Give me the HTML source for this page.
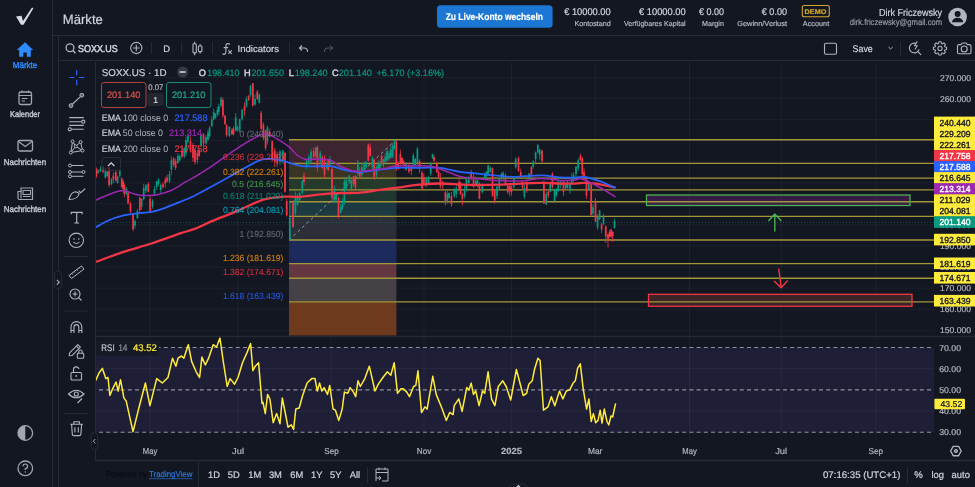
<!DOCTYPE html>
<html><head><meta charset="utf-8"><style>
html,body{margin:0;padding:0;background:#131722;width:975px;height:487px;overflow:hidden}
svg{display:block;will-change:transform;text-rendering:geometricPrecision;font-family:"Liberation Sans",sans-serif}
</style></head><body>
<svg width="975" height="487" viewBox="0 0 975 487">
<rect x="0" y="0" width="975" height="487" fill="#131722"/>
<rect x="96" y="347.5" width="838" height="84.8" fill="#1e1e37"/>
<path d="M96 330.2H934 M96 309.2H934 M96 288.1H934 M96 267.1H934 M96 246.0H934 M96 224.9H934 M96 203.9H934 M96 182.8H934 M96 161.8H934 M96 140.7H934 M96 119.7H934 M96 98.6H934 M96 77.6H934 M96 368.7H934 M96 411.1H934 M150.0 62V441 M238.0 62V441 M331.6 62V441 M424.0 62V441 M511.6 62V441 M595.2 62V441 M689.5 62V441 M781.2 62V441 M875.8 62V441" stroke="#ffffff" stroke-opacity="0.045" stroke-width="1" fill="none"/>
<path d="M96 347.5H934" stroke="#8f929b" stroke-width="1.1" stroke-dasharray="4 3.2" stroke-dashoffset="-3" fill="none"/>
<path d="M96 389.9H934" stroke="#8f929b" stroke-width="1.1" stroke-dasharray="4 3.2" stroke-dashoffset="-3" fill="none"/>
<path d="M96 432.3H934" stroke="#8f929b" stroke-width="1.1" stroke-dasharray="4 3.2" stroke-dashoffset="-3" fill="none"/>
<rect x="289" y="139.8" width="107.4" height="23.6" fill="#3d2431"/>
<rect x="289" y="163.4" width="107.4" height="14.6" fill="#3a3426"/>
<rect x="289" y="178.1" width="107.4" height="11.8" fill="#263a2c"/>
<rect x="289" y="189.9" width="107.4" height="11.8" fill="#1f3631"/>
<rect x="289" y="201.7" width="107.4" height="14.6" fill="#1d3a43"/>
<rect x="289" y="216.4" width="107.4" height="23.6" fill="#2c2f38"/>
<rect x="289" y="240.0" width="107.4" height="23.6" fill="#1c2b5c"/>
<rect x="289" y="263.6" width="107.4" height="14.6" fill="#643741"/>
<rect x="289" y="278.3" width="107.4" height="23.6" fill="#464146"/>
<rect x="289" y="301.9" width="107.4" height="33.6" fill="#6e3a1e"/>
<rect x="646.5" y="195" width="263.5" height="10.5" fill="#9c27b0" fill-opacity="0.25"/>
<rect x="648.5" y="294.3" width="263.5" height="12" fill="#3e2428"/>
<path d="M289 139.8H934 M289 163.4H934 M289 178.1H934 M289 189.9H934 M289 201.7H934 M289 216.4H934 M289 240.0H934 M289 263.6H934 M289 278.3H934 M289 301.9H934" stroke="#a39838" stroke-width="1.4" fill="none"/>
<path d="M289 240.0L396 139.8" stroke="#9598a1" stroke-width="1" stroke-dasharray="3 3" fill="none"/>
<path d="M96 222.5H934" stroke="#089981" stroke-width="1" stroke-dasharray="1 2" fill="none" opacity="0.45"/>
<path d="M98.00 169.3V174.2 M100.50 166.2V172.0 M105.40 168.5V178.7 M107.30 170.7V176.9 M111.50 178.0V185.5 M117.60 175.7V183.7 M119.80 169.5V177.6 M126.30 187.0V195.3 M135.00 219.5V228.4 M137.40 208.9V219.0 M141.60 198.3V210.0 M143.70 183.8V200.2 M145.90 184.2V192.8 M152.50 199.2V208.7 M154.40 185.8V194.8 M156.60 180.7V189.9 M158.50 178.0V186.0 M160.70 183.6V192.9 M169.50 170.8V183.1 M171.40 156.3V174.6 M177.80 153.1V163.9 M179.70 154.7V161.7 M184.30 146.8V158.2 M186.00 136.6V155.9 M188.00 133.7V143.3 M201.00 133.8V147.2 M206.00 135.2V144.8 M208.00 129.9V140.6 M209.60 125.8V138.3 M211.80 116.3V127.4 M213.70 108.9V120.3 M215.50 113.1V118.8 M217.40 106.9V116.4 M218.80 103.7V114.9 M221.00 96.3V107.4 M229.40 126.1V137.1 M235.70 113.2V131.6 M237.50 125.3V131.7 M239.70 118.7V132.7 M242.10 108.8V120.6 M246.40 96.4V107.4 M250.50 84.6V97.1 M255.00 94.0V105.7 M259.30 93.4V103.4 M267.40 125.5V144.7 M280.00 149.8V165.0 M283.00 149.9V164.3 M289.80 201.0V240.5 M295.40 191.5V216.0 M297.50 193.8V205.8 M299.70 192.2V201.9 M302.30 180.0V194.5 M306.60 158.8V169.3 M308.80 154.6V166.9 M311.00 148.9V163.4 M315.90 146.9V158.7 M320.20 150.8V164.9 M327.00 161.9V169.9 M330.10 155.7V166.9 M334.40 185.3V202.3 M336.20 192.1V202.0 M340.70 203.8V213.6 M342.50 198.3V210.1 M344.40 178.1V205.1 M346.20 179.0V190.2 M349.20 175.0V184.1 M351.40 179.3V191.5 M357.80 160.0V175.9 M362.00 163.2V177.2 M364.30 161.7V171.6 M366.20 160.9V168.0 M372.40 156.1V169.4 M376.40 165.4V177.7 M378.30 160.4V171.4 M379.80 160.6V170.0 M383.50 158.6V167.7 M385.30 153.4V163.2 M387.10 148.9V162.0 M389.00 150.8V160.6 M390.80 146.0V158.5 M392.70 143.0V158.1 M394.50 139.5V149.7 M406.00 162.2V170.9 M413.30 153.1V167.5 M415.20 157.9V166.8 M417.40 146.5V166.5 M426.20 176.8V187.0 M428.50 175.8V184.8 M430.70 162.5V175.8 M432.50 153.7V159.0 M447.30 190.4V203.7 M449.10 192.3V199.5 M454.30 188.2V197.9 M456.30 185.5V197.9 M464.60 186.0V198.5 M466.40 176.6V191.5 M468.80 175.6V185.4 M475.70 176.5V185.9 M477.50 179.3V187.5 M482.30 183.4V193.5 M484.90 172.0V179.4 M486.60 170.8V178.0 M488.20 164.7V175.8 M490.40 166.3V172.6 M497.00 185.9V198.9 M499.30 177.9V191.0 M501.50 172.3V180.2 M503.30 171.4V180.7 M513.80 176.1V189.8 M515.70 157.0V168.8 M524.40 184.0V199.1 M529.00 172.8V180.3 M533.20 160.1V168.6 M535.60 151.5V164.2 M537.80 144.0V153.5 M539.70 149.0V159.7 M546.20 191.3V205.1 M550.20 182.3V192.3 M554.60 188.8V201.7 M556.40 188.0V197.2 M558.30 179.0V192.4 M560.70 180.9V188.4 M565.70 182.5V189.6 M567.50 180.8V188.7 M570.00 182.4V193.9 M571.80 173.1V183.9 M573.60 172.4V181.9 M576.00 165.9V177.9 M578.20 158.3V170.9 M588.80 183.5V190.6 M593.00 204.0V216.2 M597.60 214.0V229.8 M599.60 209.7V220.2 M603.50 213.7V224.8 M614.50 218.6V228.7" stroke="#089981" stroke-width="0.8" fill="none"/>
<path d="M96.20 167.4V178.3 M103.00 166.4V173.4 M109.10 167.4V187.1 M113.40 172.2V183.2 M115.80 169.8V181.8 M121.70 177.4V188.3 M123.20 179.6V192.4 M124.40 183.4V197.1 M128.10 191.2V204.3 M130.50 201.8V212.8 M133.10 213.2V231.0 M139.80 196.6V213.3 M148.30 182.0V192.4 M150.10 195.8V213.1 M163.00 182.0V188.6 M165.30 176.8V187.7 M167.10 174.6V182.5 M173.60 157.3V166.9 M175.60 158.4V170.1 M182.00 147.5V158.3 M190.50 136.8V152.7 M193.00 142.9V161.9 M195.00 149.1V164.4 M197.40 149.7V163.5 M199.20 148.4V156.9 M203.50 133.2V146.2 M222.90 97.4V117.9 M225.00 114.6V124.9 M226.60 124.1V136.8 M232.00 128.1V134.9 M233.50 126.5V135.6 M244.50 102.5V116.2 M248.60 94.9V101.0 M252.80 83.0V106.9 M257.30 90.0V99.8 M261.20 111.0V130.0 M263.40 122.4V140.4 M265.60 129.7V150.3 M269.80 128.5V137.2 M272.20 140.2V161.7 M274.80 148.0V167.1 M277.20 151.7V166.8 M285.00 152.1V192.6 M286.70 199.0V216.4 M293.10 200.2V227.9 M304.00 172.3V185.3 M313.70 147.5V159.5 M317.40 145.5V171.5 M322.30 154.8V168.9 M324.50 155.3V177.6 M328.30 158.7V171.3 M332.00 166.4V201.0 M338.50 196.9V218.5 M353.60 175.8V186.5 M355.40 175.1V191.1 M359.70 167.0V179.1 M368.30 143.5V161.4 M370.20 143.7V156.5 M374.20 158.5V179.9 M381.60 155.2V166.0 M396.40 140.2V171.1 M398.20 161.3V169.8 M400.40 149.4V165.4 M402.00 156.9V164.4 M403.70 159.4V166.9 M408.90 163.0V173.3 M411.30 165.0V175.4 M419.60 159.4V173.2 M422.00 170.5V190.3 M423.80 173.4V184.8 M434.00 154.6V162.0 M436.80 161.4V172.8 M438.60 169.9V178.6 M440.40 173.0V188.4 M442.80 180.3V191.0 M445.40 190.5V205.5 M451.50 191.9V206.7 M459.00 178.9V190.3 M460.50 181.9V194.9 M462.40 192.7V205.5 M471.20 169.8V180.5 M473.50 174.3V187.8 M479.40 182.1V199.5 M492.50 167.4V196.9 M494.70 189.8V203.5 M505.50 173.4V185.5 M507.70 183.4V194.1 M509.60 183.4V196.3 M511.40 184.2V195.6 M518.50 156.5V171.9 M520.70 168.7V178.4 M522.50 181.4V189.3 M526.80 179.6V192.9 M531.40 166.2V177.2 M542.00 149.5V163.0 M543.90 180.6V203.9 M548.30 190.5V198.0 M552.40 171.9V188.6 M563.50 180.1V195.9 M580.40 153.5V161.0 M582.30 156.8V177.8 M584.10 168.4V178.5 M586.50 177.9V198.9 M591.20 182.5V216.5 M595.50 198.0V222.5 M601.60 222.7V233.1 M605.80 225.5V243.0 M608.00 233.5V247.5 M609.60 230.1V237.7 M611.20 228.8V238.3 M612.70 231.1V242.0" stroke="#f23645" stroke-width="0.8" fill="none"/>
<path d="M97.15 170.3h1.7v2.7h-1.7z M99.65 168.5h1.7v2.5h-1.7z M104.55 171.0h1.7v6.7h-1.7z M106.45 172.0h1.7v4.0h-1.7z M110.65 179.5h1.7v4.5h-1.7z M116.75 176.8h1.7v6.2h-1.7z M118.95 171.0h1.7v4.8h-1.7z M125.45 188.7h1.7v4.7h-1.7z M134.15 221.0h1.7v4.6h-1.7z M136.55 211.0h1.7v7.0h-1.7z M140.75 199.0h1.7v8.0h-1.7z M142.85 188.0h1.7v11.0h-1.7z M145.05 185.0h1.7v5.7h-1.7z M151.65 201.0h1.7v5.4h-1.7z M153.55 189.0h1.7v4.5h-1.7z M155.75 181.5h1.7v5.5h-1.7z M157.65 179.7h1.7v4.6h-1.7z M159.85 185.0h1.7v5.0h-1.7z M168.65 174.0h1.7v7.5h-1.7z M170.55 160.3h1.7v9.2h-1.7z M176.95 155.7h1.7v7.3h-1.7z M178.85 155.7h1.7v4.6h-1.7z M183.45 148.3h1.7v8.3h-1.7z M185.15 140.0h1.7v13.0h-1.7z M187.15 136.0h1.7v5.7h-1.7z M200.15 135.0h1.7v10.4h-1.7z M205.15 137.0h1.7v6.5h-1.7z M207.15 132.4h1.7v7.6h-1.7z M208.75 128.0h1.7v8.0h-1.7z M210.95 119.5h1.7v6.5h-1.7z M212.85 112.0h1.7v7.5h-1.7z M214.65 114.0h1.7v3.7h-1.7z M216.55 110.0h1.7v4.0h-1.7z M217.95 106.6h1.7v5.4h-1.7z M220.15 98.3h1.7v7.4h-1.7z M228.55 127.0h1.7v9.0h-1.7z M234.85 117.4h1.7v13.0h-1.7z M236.65 126.7h1.7v3.7h-1.7z M238.85 119.3h1.7v11.1h-1.7z M241.25 110.0h1.7v9.3h-1.7z M245.55 99.0h1.7v7.4h-1.7z M249.65 86.0h1.7v9.3h-1.7z M254.15 99.0h1.7v5.5h-1.7z M258.45 94.4h1.7v8.3h-1.7z M266.55 127.6h1.7v13.8h-1.7z M279.15 151.6h1.7v10.1h-1.7z M282.15 150.8h1.7v10.7h-1.7z M288.95 217.6h1.7v22.4h-1.7z M294.55 197.0h1.7v16.3h-1.7z M296.65 196.0h1.7v8.7h-1.7z M298.85 193.0h1.7v7.0h-1.7z M301.45 181.0h1.7v11.8h-1.7z M305.75 160.5h1.7v6.5h-1.7z M307.95 157.0h1.7v6.7h-1.7z M310.15 151.8h1.7v9.7h-1.7z M315.05 147.5h1.7v8.5h-1.7z M319.35 153.0h1.7v8.5h-1.7z M326.15 162.7h1.7v5.5h-1.7z M329.25 159.0h1.7v5.5h-1.7z M333.55 188.5h1.7v12.9h-1.7z M335.35 194.0h1.7v5.6h-1.7z M339.85 207.0h1.7v5.5h-1.7z M341.65 203.0h1.7v5.8h-1.7z M343.55 182.0h1.7v21.0h-1.7z M345.35 180.2h1.7v8.3h-1.7z M348.35 175.6h1.7v6.4h-1.7z M350.55 180.0h1.7v8.5h-1.7z M356.95 161.8h1.7v11.9h-1.7z M361.15 167.3h1.7v7.4h-1.7z M363.45 164.5h1.7v6.5h-1.7z M365.35 161.8h1.7v5.5h-1.7z M371.55 157.7h1.7v9.3h-1.7z M375.55 167.0h1.7v8.2h-1.7z M377.45 164.0h1.7v5.7h-1.7z M378.95 163.0h1.7v5.0h-1.7z M382.65 159.5h1.7v5.5h-1.7z M384.45 156.8h1.7v4.6h-1.7z M386.25 151.2h1.7v9.2h-1.7z M388.15 153.0h1.7v5.6h-1.7z M389.95 149.4h1.7v8.3h-1.7z M391.85 145.7h1.7v11.1h-1.7z M393.65 140.1h1.7v8.4h-1.7z M405.15 164.0h1.7v5.7h-1.7z M412.45 155.3h1.7v9.2h-1.7z M414.35 159.0h1.7v6.4h-1.7z M416.55 148.8h1.7v13.9h-1.7z M425.35 178.4h1.7v6.4h-1.7z M427.65 178.0h1.7v6.0h-1.7z M429.85 163.6h1.7v10.1h-1.7z M431.65 154.4h1.7v3.6h-1.7z M446.45 194.0h1.7v8.3h-1.7z M448.25 193.0h1.7v5.0h-1.7z M453.45 189.4h1.7v6.6h-1.7z M455.45 188.5h1.7v5.5h-1.7z M463.75 190.4h1.7v5.6h-1.7z M465.55 179.3h1.7v9.2h-1.7z M467.95 179.3h1.7v3.7h-1.7z M474.85 181.0h1.7v3.0h-1.7z M476.65 180.0h1.7v6.0h-1.7z M481.45 184.8h1.7v7.4h-1.7z M484.05 173.7h1.7v4.7h-1.7z M485.75 172.0h1.7v4.0h-1.7z M487.35 165.4h1.7v8.3h-1.7z M489.55 168.0h1.7v4.0h-1.7z M496.15 186.7h1.7v9.3h-1.7z M498.45 179.3h1.7v9.2h-1.7z M500.65 173.7h1.7v5.6h-1.7z M502.45 172.8h1.7v5.6h-1.7z M512.95 177.4h1.7v9.3h-1.7z M514.85 159.0h1.7v8.3h-1.7z M523.55 187.6h1.7v9.2h-1.7z M528.15 173.7h1.7v4.7h-1.7z M532.35 161.8h1.7v4.6h-1.7z M534.75 152.5h1.7v6.5h-1.7z M536.95 145.0h1.7v7.5h-1.7z M538.85 149.8h1.7v4.6h-1.7z M545.35 194.0h1.7v10.2h-1.7z M549.35 184.3h1.7v7.4h-1.7z M553.75 189.8h1.7v11.2h-1.7z M555.55 189.0h1.7v6.4h-1.7z M557.45 181.5h1.7v9.2h-1.7z M559.85 181.5h1.7v3.7h-1.7z M564.85 184.3h1.7v3.7h-1.7z M566.65 182.4h1.7v5.6h-1.7z M569.15 183.4h1.7v7.3h-1.7z M570.95 177.0h1.7v5.4h-1.7z M572.75 175.0h1.7v4.7h-1.7z M575.15 166.8h1.7v7.2h-1.7z M577.35 160.3h1.7v8.3h-1.7z M587.95 184.2h1.7v5.4h-1.7z M592.15 207.3h1.7v6.2h-1.7z M596.75 216.5h1.7v10.8h-1.7z M598.75 210.4h1.7v9.2h-1.7z M602.65 216.5h1.7v7.7h-1.7z M613.65 221.0h1.7v7.0h-1.7z" fill="#089981"/>
<path d="M95.35 168.5h1.7v8.3h-1.7z M102.15 169.0h1.7v3.0h-1.7z M108.25 171.0h1.7v14.0h-1.7z M112.55 175.8h1.7v3.7h-1.7z M114.95 172.0h1.7v8.4h-1.7z M120.85 178.6h1.7v8.4h-1.7z M122.35 181.4h1.7v7.3h-1.7z M123.55 185.0h1.7v9.3h-1.7z M127.25 192.4h1.7v11.1h-1.7z M129.65 203.5h1.7v8.3h-1.7z M132.25 214.6h1.7v14.7h-1.7z M138.95 198.0h1.7v12.0h-1.7z M147.45 184.0h1.7v7.7h-1.7z M149.25 199.0h1.7v12.0h-1.7z M162.15 184.3h1.7v2.7h-1.7z M164.45 179.7h1.7v3.7h-1.7z M166.25 177.8h1.7v3.7h-1.7z M172.75 158.5h1.7v6.5h-1.7z M174.75 161.0h1.7v6.7h-1.7z M181.15 151.0h1.7v5.6h-1.7z M189.65 141.0h1.7v10.0h-1.7z M192.15 145.0h1.7v13.0h-1.7z M194.15 150.0h1.7v12.0h-1.7z M196.55 152.7h1.7v7.3h-1.7z M198.35 150.0h1.7v6.0h-1.7z M202.65 134.0h1.7v9.5h-1.7z M222.05 100.0h1.7v15.8h-1.7z M224.15 115.8h1.7v8.2h-1.7z M225.75 125.0h1.7v10.2h-1.7z M231.15 129.7h1.7v4.6h-1.7z M232.65 128.5h1.7v5.5h-1.7z M243.65 106.4h1.7v4.6h-1.7z M247.75 96.2h1.7v3.8h-1.7z M251.95 83.3h1.7v22.1h-1.7z M256.45 91.6h1.7v7.4h-1.7z M260.35 112.8h1.7v15.7h-1.7z M262.55 124.8h1.7v12.9h-1.7z M264.75 130.4h1.7v17.6h-1.7z M268.95 132.2h1.7v3.8h-1.7z M271.35 141.4h1.7v18.6h-1.7z M273.95 150.6h1.7v11.1h-1.7z M276.35 154.3h1.7v9.3h-1.7z M284.15 153.0h1.7v38.7h-1.7z M285.85 201.0h1.7v14.5h-1.7z M292.25 202.7h1.7v24.1h-1.7z M303.15 175.6h1.7v6.4h-1.7z M312.85 150.8h1.7v6.4h-1.7z M316.55 147.5h1.7v20.5h-1.7z M321.45 157.2h1.7v10.8h-1.7z M323.65 159.4h1.7v15.1h-1.7z M327.45 160.0h1.7v10.0h-1.7z M331.15 169.0h1.7v28.7h-1.7z M337.65 197.7h1.7v18.5h-1.7z M352.75 176.5h1.7v7.5h-1.7z M354.55 178.4h1.7v9.2h-1.7z M358.85 171.0h1.7v5.5h-1.7z M367.45 144.8h1.7v15.6h-1.7z M369.35 147.5h1.7v8.3h-1.7z M373.35 159.5h1.7v17.5h-1.7z M380.75 155.8h1.7v8.2h-1.7z M395.55 142.0h1.7v25.0h-1.7z M397.35 163.2h1.7v5.5h-1.7z M399.55 154.0h1.7v9.2h-1.7z M401.15 158.0h1.7v5.0h-1.7z M402.85 161.4h1.7v3.6h-1.7z M408.05 166.0h1.7v5.5h-1.7z M410.45 166.4h1.7v4.6h-1.7z M418.75 160.8h1.7v7.4h-1.7z M421.15 172.8h1.7v15.7h-1.7z M422.95 177.4h1.7v6.6h-1.7z M433.15 157.0h1.7v3.8h-1.7z M435.95 163.6h1.7v8.4h-1.7z M437.75 172.0h1.7v4.5h-1.7z M439.55 178.4h1.7v7.3h-1.7z M441.95 182.0h1.7v3.7h-1.7z M444.55 192.2h1.7v10.1h-1.7z M450.65 196.0h1.7v8.2h-1.7z M458.15 182.0h1.7v6.5h-1.7z M459.65 183.0h1.7v11.0h-1.7z M461.55 194.0h1.7v4.7h-1.7z M470.35 173.7h1.7v4.7h-1.7z M472.65 176.5h1.7v10.2h-1.7z M478.55 184.0h1.7v14.7h-1.7z M491.65 168.2h1.7v27.8h-1.7z M493.85 190.4h1.7v10.1h-1.7z M504.65 177.4h1.7v7.4h-1.7z M506.85 185.7h1.7v6.5h-1.7z M508.75 186.0h1.7v5.0h-1.7z M510.55 186.7h1.7v5.5h-1.7z M517.65 158.0h1.7v13.0h-1.7z M519.85 172.0h1.7v4.5h-1.7z M521.65 182.0h1.7v5.6h-1.7z M525.95 182.0h1.7v8.4h-1.7z M530.55 167.3h1.7v7.4h-1.7z M541.15 150.7h1.7v10.1h-1.7z M543.05 183.0h1.7v20.3h-1.7z M547.45 191.7h1.7v3.7h-1.7z M551.55 174.0h1.7v13.0h-1.7z M562.65 181.5h1.7v10.2h-1.7z M579.55 155.7h1.7v4.6h-1.7z M581.45 158.5h1.7v15.5h-1.7z M583.25 172.3h1.7v3.7h-1.7z M585.65 179.6h1.7v16.2h-1.7z M590.35 184.2h1.7v30.8h-1.7z M594.65 201.0h1.7v20.0h-1.7z M600.75 224.2h1.7v5.4h-1.7z M604.95 226.5h1.7v10.0h-1.7z M607.15 234.2h1.7v5.4h-1.7z M608.75 232.0h1.7v4.5h-1.7z M610.35 229.6h1.7v6.9h-1.7z M611.85 232.0h1.7v4.5h-1.7z" fill="#f23645"/>
<path d="M96.0 261.9 C100.5 260.3 113.5 255.2 122.7 252.1 C131.9 249.0 141.9 246.6 151.5 243.5 C161.1 240.4 173.1 235.8 180.2 233.4 C187.3 231.0 188.6 231.2 194.0 229.1 C199.4 227.0 205.8 223.8 212.6 220.9 C219.4 218.0 227.6 215.1 235.1 211.9 C242.6 208.7 252.0 203.9 257.7 201.7 C263.3 199.4 264.5 199.2 269.0 198.4 C273.5 197.6 279.6 196.9 284.8 196.6 C290.0 196.3 294.1 197.2 300.0 196.8 C305.9 196.4 313.3 195.0 320.0 194.4 C326.7 193.8 333.3 193.5 340.0 193.2 C346.7 192.9 353.3 193.1 360.0 192.6 C366.7 192.1 374.0 190.7 380.0 189.9 C386.0 189.1 389.3 188.7 396.0 187.8 C402.7 186.9 412.7 185.4 420.0 184.7 C427.3 184.0 433.3 183.5 440.0 183.5 C446.7 183.5 454.2 184.2 460.0 184.5 C465.8 184.8 468.3 185.0 475.0 185.0 C481.7 185.0 489.0 185.0 500.0 184.6 C511.0 184.2 531.0 183.0 541.0 182.8 C551.0 182.6 554.3 183.5 560.0 183.6 C565.7 183.7 571.0 183.7 575.0 183.6 C579.0 183.5 580.5 182.8 584.0 182.8 C587.5 182.8 590.8 182.8 596.0 183.6 C601.2 184.4 612.2 186.8 615.5 187.4" stroke="#f23645" stroke-width="2.3" fill="none"/>
<path d="M96.0 227.2 C98.1 226.1 104.0 222.4 108.4 220.5 C112.9 218.6 117.9 216.8 122.7 215.6 C127.5 214.4 132.3 213.9 137.1 213.3 C141.9 212.7 146.7 212.9 151.5 211.9 C156.3 210.9 161.0 209.3 165.8 207.6 C170.6 205.9 175.5 203.7 180.2 201.8 C184.9 199.9 188.6 198.6 194.0 196.0 C199.4 193.4 205.8 189.8 212.6 186.0 C219.4 182.2 227.6 177.7 235.1 173.5 C242.6 169.3 252.0 163.5 257.7 161.1 C263.3 158.7 265.2 159.1 269.0 158.9 C272.8 158.7 276.8 159.3 280.3 160.0 C283.8 160.7 285.9 161.9 290.0 163.0 C294.1 164.1 298.3 165.8 305.0 166.3 C311.7 166.8 323.3 165.6 330.0 166.2 C336.7 166.8 340.0 169.0 345.0 170.0 C350.0 171.0 355.0 172.0 360.0 172.0 C365.0 172.0 370.8 170.7 375.0 170.2 C379.2 169.7 381.5 169.4 385.0 169.0 C388.5 168.6 390.2 168.0 396.0 167.8 C401.8 167.6 412.7 167.8 420.0 167.8 C427.3 167.8 433.3 167.1 440.0 167.8 C446.7 168.5 454.2 171.0 460.0 171.9 C465.8 172.8 468.3 172.6 475.0 173.3 C481.7 174.0 493.3 175.3 500.0 175.9 C506.7 176.5 508.2 177.0 515.0 176.9 C521.8 176.8 533.5 175.3 541.0 175.4 C548.5 175.5 554.3 177.0 560.0 177.4 C565.7 177.8 571.0 177.7 575.0 177.6 C579.0 177.5 579.8 176.4 584.0 177.0 C588.2 177.6 594.8 179.4 600.0 181.2 C605.2 183.0 612.9 186.9 615.5 188.0" stroke="#2962ff" stroke-width="1.8" fill="none"/>
<path d="M96.0 200.0 C98.1 199.1 104.0 196.3 108.4 194.7 C112.9 193.1 118.3 190.6 122.7 190.5 C127.1 190.4 131.3 193.4 135.0 194.2 C138.7 195.0 141.3 195.4 145.0 195.5 C148.7 195.6 152.8 195.6 157.2 194.7 C161.6 193.8 166.8 192.5 171.6 190.3 C176.4 188.1 182.3 183.8 186.0 181.7 C189.7 179.5 189.6 180.1 194.0 177.4 C198.4 174.7 205.8 170.2 212.6 165.6 C219.4 161.0 227.6 154.7 235.1 149.8 C242.6 144.9 252.4 138.9 257.7 136.3 C263.0 133.7 262.9 133.2 266.7 134.0 C270.5 134.8 276.4 138.5 280.3 140.8 C284.2 143.1 287.2 145.2 290.0 147.6 C292.8 150.0 294.5 153.1 297.0 155.0 C299.5 156.9 302.0 158.6 305.0 159.3 C308.0 160.0 310.8 159.2 315.0 159.3 C319.2 159.4 325.8 158.9 330.0 160.0 C334.2 161.1 335.8 164.1 340.0 166.0 C344.2 167.9 350.0 170.6 355.0 171.3 C360.0 172.0 365.0 170.7 370.0 170.2 C375.0 169.7 380.7 169.2 385.0 168.5 C389.3 167.8 390.2 166.4 396.0 166.0 C401.8 165.6 413.5 165.6 420.0 165.8 C426.5 166.0 428.3 165.5 435.0 167.3 C441.7 169.1 453.3 174.6 460.0 176.5 C466.7 178.4 469.2 177.8 475.0 178.5 C480.8 179.2 487.5 180.1 495.0 180.5 C502.5 180.9 512.3 181.3 520.0 181.0 C527.7 180.7 534.3 178.6 541.0 178.5 C547.7 178.4 554.3 180.2 560.0 180.5 C565.7 180.8 571.3 180.2 575.0 180.0 C578.7 179.8 577.8 177.8 582.0 179.0 C586.2 180.2 594.4 184.5 600.0 187.5 C605.6 190.5 612.9 195.4 615.5 197.0" stroke="#9c27b0" stroke-width="1.5" fill="none"/>
<text x="283.3" y="136.8" font-size="8.8" fill="#787b86" text-anchor="end" font-weight="normal" stroke="#787b86" stroke-width="0.15" textLength="43.7" lengthAdjust="spacingAndGlyphs" opacity="0.78">0 (240.440)</text>
<text x="283.3" y="160.4" font-size="8.8" fill="#f23645" text-anchor="end" font-weight="normal" stroke="#f23645" stroke-width="0.15" textLength="60.4" lengthAdjust="spacingAndGlyphs" opacity="0.78">0.236 (229.209)</text>
<text x="283.3" y="175.1" font-size="8.8" fill="#ff9800" text-anchor="end" font-weight="normal" stroke="#ff9800" stroke-width="0.15" textLength="60.4" lengthAdjust="spacingAndGlyphs" opacity="0.78">0.382 (222.261)</text>
<text x="283.3" y="186.9" font-size="8.8" fill="#4caf50" text-anchor="end" font-weight="normal" stroke="#4caf50" stroke-width="0.15" textLength="51.3" lengthAdjust="spacingAndGlyphs" opacity="0.78">0.5 (216.645)</text>
<text x="283.3" y="198.7" font-size="8.8" fill="#089981" text-anchor="end" font-weight="normal" stroke="#089981" stroke-width="0.15" textLength="60.4" lengthAdjust="spacingAndGlyphs" opacity="0.78">0.618 (211.029)</text>
<text x="283.3" y="213.4" font-size="8.8" fill="#00bcd4" text-anchor="end" font-weight="normal" stroke="#00bcd4" stroke-width="0.15" textLength="60.4" lengthAdjust="spacingAndGlyphs" opacity="0.78">0.764 (204.081)</text>
<text x="283.3" y="237.0" font-size="8.8" fill="#787b86" text-anchor="end" font-weight="normal" stroke="#787b86" stroke-width="0.15" textLength="43.7" lengthAdjust="spacingAndGlyphs" opacity="0.78">1 (192.850)</text>
<text x="283.3" y="260.6" font-size="8.8" fill="#ff9800" text-anchor="end" font-weight="normal" stroke="#ff9800" stroke-width="0.15" textLength="60.4" lengthAdjust="spacingAndGlyphs" opacity="0.78">1.236 (181.619)</text>
<text x="283.3" y="275.3" font-size="8.8" fill="#f23645" text-anchor="end" font-weight="normal" stroke="#f23645" stroke-width="0.15" textLength="60.4" lengthAdjust="spacingAndGlyphs" opacity="0.78">1.382 (174.671)</text>
<text x="283.3" y="298.9" font-size="8.8" fill="#2962ff" text-anchor="end" font-weight="normal" stroke="#2962ff" stroke-width="0.15" textLength="60.4" lengthAdjust="spacingAndGlyphs" opacity="0.78">1.618 (163.439)</text>
<rect x="646.5" y="195" width="263.5" height="10.5" fill="none" stroke="#4caf50" stroke-width="1.3"/>
<rect x="648.5" y="294.3" width="263.5" height="12" fill="none" stroke="#f23645" stroke-width="1.3"/>
<path d="M774.8 231.5V214M768.4 221L774.8 214L781.4 221" stroke="#4caf50" stroke-width="1.4" fill="none"/>
<path d="M778.7 268.5L781.2 287.7M774 281L781.2 287.7L787.7 280.5" stroke="#f23645" stroke-width="1.4" fill="none"/>
<path d="M95.6 380.8 L99.0 373.0 L102.4 368.4 L105.8 378.6 L108.0 377.5 L109.9 395.5 L112.6 388.8 L116.0 382.0 L118.2 391.0 L120.5 379.7 L123.9 397.8 L126.2 401.2 L133.0 431.7 L138.6 409.0 L145.4 383.0 L149.9 405.7 L156.7 378.6 L162.3 383.0 L168.0 377.5 L172.5 358.2 L175.9 366.2 L178.0 358.2 L181.5 356.0 L183.8 358.2 L188.3 344.7 L191.7 361.6 L196.2 371.8 L199.6 377.5 L201.9 357.1 L205.3 365.0 L208.6 358.2 L213.2 344.7 L216.6 347.0 L219.9 337.9 L223.3 361.6 L227.2 386.5 L230.1 378.6 L234.6 384.2 L238.0 377.5 L242.5 362.8 L247.0 352.6 L250.6 343.6 L252.9 370.7 L255.2 366.2 L258.6 362.8 L262.0 403.4 L263.0 402.3 L265.3 413.6 L267.6 394.4 L269.9 399.0 L273.2 422.7 L276.6 413.6 L280.0 423.8 L282.3 398.0 L284.5 409.0 L288.0 427.2 L291.3 424.9 L293.6 429.4 L295.8 409.0 L299.2 408.0 L302.6 395.5 L307.1 383.0 L311.7 378.6 L315.0 378.6 L317.3 391.0 L319.6 383.0 L321.8 391.0 L324.1 387.6 L327.5 394.4 L329.7 385.4 L333.1 409.0 L335.4 410.2 L338.8 420.4 L342.2 409.0 L344.4 392.1 L347.8 393.3 L350.1 387.6 L353.5 392.1 L355.7 396.7 L358.0 380.8 L360.3 386.5 L364.8 378.6 L369.3 366.2 L375.0 391.0 L378.3 384.2 L382.9 377.5 L387.4 371.8 L390.8 375.2 L394.2 362.8 L397.5 393.3 L401.0 388.8 L403.4 388.8 L406.8 392.1 L409.5 396.7 L413.6 386.5 L415.8 385.4 L418.0 370.7 L421.5 412.5 L424.9 406.8 L427.1 409.1 L432.8 376.3 L436.2 394.4 L441.8 408.0 L446.3 420.4 L449.7 412.5 L453.1 414.7 L454.2 405.7 L458.8 398.9 L462.1 411.4 L466.7 387.6 L468.9 389.9 L471.2 383.1 L473.4 394.4 L475.7 391.0 L479.1 405.7 L482.5 391.0 L484.7 393.3 L488.1 371.8 L491.5 398.9 L494.9 405.7 L498.3 386.5 L502.8 380.8 L506.2 386.5 L510.7 400.0 L516.4 369.5 L523.2 395.5 L526.6 393.3 L528.8 384.2 L532.2 380.8 L534.5 369.5 L537.9 358.2 L540.1 360.5 L543.5 410.2 L548.0 406.8 L551.4 396.7 L554.8 405.7 L559.5 391.0 L562.9 398.9 L566.3 391.0 L569.7 389.9 L573.1 383.1 L575.3 380.8 L577.6 368.4 L580.3 363.9 L583.2 388.8 L586.6 409.1 L588.9 398.9 L591.2 421.5 L593.4 413.6 L595.7 422.7 L598.0 420.4 L600.2 410.2 L602.0 423.1 L604.3 409.1 L607.0 421.5 L608.8 424.9 L611.0 415.9 L612.6 417.0 L615.6 403.4" stroke="#ffeb3b" stroke-width="1.5" fill="none" stroke-linejoin="round"/>
<rect x="96" y="339.5" width="63" height="16" rx="2" fill="#161a25"/>
<text x="101.3" y="351.3" font-size="9.6" fill="#c3c6ce" text-anchor="start" font-weight="normal" stroke="#c3c6ce" stroke-width="0.2" textLength="13.3" lengthAdjust="spacingAndGlyphs" >RSI</text>
<text x="118.2" y="351.3" font-size="9.6" fill="#8a8d96" text-anchor="start" font-weight="normal" stroke="#8a8d96" stroke-width="0.2" textLength="9.3" lengthAdjust="spacingAndGlyphs" >14</text>
<text x="133.0" y="351.3" font-size="9.6" fill="#ffeb3b" text-anchor="start" font-weight="normal" stroke="#ffeb3b" stroke-width="0.2" textLength="23.9" lengthAdjust="spacingAndGlyphs" >43.52</text>
<path d="M96 336.5H975" stroke="#262a35" stroke-width="1.5"/>
<text x="101.8" y="75.8" font-size="10" fill="#d1d4dc" text-anchor="start" font-weight="normal" stroke="#d1d4dc" stroke-width="0.2" textLength="64.7" lengthAdjust="spacingAndGlyphs" >SOXX.US · 1D</text>
<circle cx="182.6" cy="72" r="5.5" fill="#363a45"/><path d="M179.6 72H185.6" stroke="#d1d4dc" stroke-width="1.6"/>
<text x="198.7" y="75.5" font-size="9.2" fill="#d1d4dc" text-anchor="start" font-weight="normal" stroke="#d1d4dc" stroke-width="0.45" >O</text>
<text x="207.2" y="75.5" font-size="9.2" fill="#089981" text-anchor="start" font-weight="normal" stroke="#089981" stroke-width="0.2" textLength="32.3" lengthAdjust="spacingAndGlyphs" >198.410</text>
<text x="244.0" y="75.5" font-size="9.2" fill="#d1d4dc" text-anchor="start" font-weight="normal" stroke="#d1d4dc" stroke-width="0.45" >H</text>
<text x="251.5" y="75.5" font-size="9.2" fill="#089981" text-anchor="start" font-weight="normal" stroke="#089981" stroke-width="0.2" textLength="32.5" lengthAdjust="spacingAndGlyphs" >201.650</text>
<text x="288.8" y="75.5" font-size="9.2" fill="#d1d4dc" text-anchor="start" font-weight="normal" stroke="#d1d4dc" stroke-width="0.45" >L</text>
<text x="294.7" y="75.5" font-size="9.2" fill="#089981" text-anchor="start" font-weight="normal" stroke="#089981" stroke-width="0.2" textLength="32.8" lengthAdjust="spacingAndGlyphs" >198.240</text>
<text x="332.0" y="75.5" font-size="9.2" fill="#d1d4dc" text-anchor="start" font-weight="normal" stroke="#d1d4dc" stroke-width="0.45" >C</text>
<text x="338.7" y="75.5" font-size="9.2" fill="#089981" text-anchor="start" font-weight="normal" stroke="#089981" stroke-width="0.2" textLength="33.3" lengthAdjust="spacingAndGlyphs" >201.140</text>
<text x="376.5" y="75.5" font-size="9.2" fill="#089981" text-anchor="start" font-weight="normal" stroke="#089981" stroke-width="0.2" textLength="67.5" lengthAdjust="spacingAndGlyphs" >+6.170 (+3.16%)</text>
<rect x="101.5" y="82.5" width="44.5" height="25" rx="2.5" fill="#131722" stroke="#b2443f" stroke-width="1"/>
<text x="123.7" y="98.3" font-size="9.4" fill="#e0534d" text-anchor="middle" font-weight="normal" stroke="#e0534d" stroke-width="0.2" textLength="33.5" lengthAdjust="spacingAndGlyphs" >201.140</text>
<rect x="166.5" y="82.5" width="44.5" height="25" rx="2.5" fill="#131722" stroke="#1f8a7c" stroke-width="1"/>
<text x="188.7" y="98.3" font-size="9.4" fill="#1ea88f" text-anchor="middle" font-weight="normal" stroke="#1ea88f" stroke-width="0.2" textLength="33.5" lengthAdjust="spacingAndGlyphs" >201.210</text>
<text x="155.8" y="89.8" font-size="8.2" fill="#b2b5be" text-anchor="middle" font-weight="normal" stroke="#b2b5be" stroke-width="0.2" textLength="15.0" lengthAdjust="spacingAndGlyphs" >0.07</text>
<rect x="147.5" y="93" width="16.2" height="13" rx="2" fill="#23262f"/>
<text x="155.6" y="103.0" font-size="8.5" fill="#d1d4dc" text-anchor="middle" font-weight="normal" stroke="#d1d4dc" stroke-width="0.2" >1</text>
<text x="101.8" y="120.9" font-size="9.4" fill="#b2b5be" textLength="66.5" lengthAdjust="spacingAndGlyphs"><tspan fill="#d1d4dc" stroke="#d1d4dc" stroke-width="0.15">EMA</tspan> 100 close 0</text>
<text x="174.5" y="120.9" font-size="9.4" fill="#2962ff" text-anchor="start" font-weight="normal" stroke="#2962ff" stroke-width="0.2" textLength="33.0" lengthAdjust="spacingAndGlyphs" >217.588</text>
<text x="101.8" y="136.4" font-size="9.4" fill="#b2b5be" textLength="61.2" lengthAdjust="spacingAndGlyphs"><tspan fill="#d1d4dc" stroke="#d1d4dc" stroke-width="0.15">EMA</tspan> 50 close 0</text>
<text x="169.0" y="136.4" font-size="9.4" fill="#9c27b0" text-anchor="start" font-weight="normal" stroke="#9c27b0" stroke-width="0.2" textLength="33.0" lengthAdjust="spacingAndGlyphs" >213.314</text>
<text x="101.8" y="152.2" font-size="9.4" fill="#b2b5be" textLength="66.5" lengthAdjust="spacingAndGlyphs"><tspan fill="#d1d4dc" stroke="#d1d4dc" stroke-width="0.15">EMA</tspan> 200 close 0</text>
<text x="174.5" y="152.2" font-size="9.4" fill="#f23645" text-anchor="start" font-weight="normal" stroke="#f23645" stroke-width="0.2" textLength="33.0" lengthAdjust="spacingAndGlyphs" >217.758</text>
<rect x="102" y="157.5" width="18.5" height="13" rx="2" fill="none" stroke="#2a2e39" stroke-width="1"/>
<path d="M108 166L111.2 162.8L114.4 166" stroke="#d1d4dc" stroke-width="1.2" fill="none"/>
<rect x="934" y="62" width="41" height="273" fill="#131722"/>
<text x="971.0" y="80.6" font-size="8.4" fill="#b2b5be" text-anchor="end" font-weight="normal" stroke="#b2b5be" stroke-width="0.2" textLength="31.0" lengthAdjust="spacingAndGlyphs" >270.000</text>
<text x="971.0" y="101.6" font-size="8.4" fill="#b2b5be" text-anchor="end" font-weight="normal" stroke="#b2b5be" stroke-width="0.2" textLength="31.0" lengthAdjust="spacingAndGlyphs" >260.000</text>
<text x="971.0" y="122.7" font-size="8.4" fill="#b2b5be" text-anchor="end" font-weight="normal" stroke="#b2b5be" stroke-width="0.2" textLength="31.0" lengthAdjust="spacingAndGlyphs" >250.000</text>
<text x="971.0" y="143.7" font-size="8.4" fill="#b2b5be" text-anchor="end" font-weight="normal" stroke="#b2b5be" stroke-width="0.2" textLength="31.0" lengthAdjust="spacingAndGlyphs" >240.000</text>
<text x="971.0" y="164.8" font-size="8.4" fill="#b2b5be" text-anchor="end" font-weight="normal" stroke="#b2b5be" stroke-width="0.2" textLength="31.0" lengthAdjust="spacingAndGlyphs" >230.000</text>
<text x="971.0" y="185.8" font-size="8.4" fill="#b2b5be" text-anchor="end" font-weight="normal" stroke="#b2b5be" stroke-width="0.2" textLength="31.0" lengthAdjust="spacingAndGlyphs" >220.000</text>
<text x="971.0" y="206.9" font-size="8.4" fill="#b2b5be" text-anchor="end" font-weight="normal" stroke="#b2b5be" stroke-width="0.2" textLength="31.0" lengthAdjust="spacingAndGlyphs" >210.000</text>
<text x="971.0" y="227.9" font-size="8.4" fill="#b2b5be" text-anchor="end" font-weight="normal" stroke="#b2b5be" stroke-width="0.2" textLength="31.0" lengthAdjust="spacingAndGlyphs" >200.000</text>
<text x="971.0" y="249.0" font-size="8.4" fill="#b2b5be" text-anchor="end" font-weight="normal" stroke="#b2b5be" stroke-width="0.2" textLength="31.0" lengthAdjust="spacingAndGlyphs" >190.000</text>
<text x="971.0" y="270.1" font-size="8.4" fill="#b2b5be" text-anchor="end" font-weight="normal" stroke="#b2b5be" stroke-width="0.2" textLength="31.0" lengthAdjust="spacingAndGlyphs" >180.000</text>
<text x="971.0" y="291.1" font-size="8.4" fill="#b2b5be" text-anchor="end" font-weight="normal" stroke="#b2b5be" stroke-width="0.2" textLength="31.0" lengthAdjust="spacingAndGlyphs" >170.000</text>
<text x="971.0" y="312.2" font-size="8.4" fill="#b2b5be" text-anchor="end" font-weight="normal" stroke="#b2b5be" stroke-width="0.2" textLength="31.0" lengthAdjust="spacingAndGlyphs" >160.000</text>
<text x="971.0" y="333.2" font-size="8.4" fill="#b2b5be" text-anchor="end" font-weight="normal" stroke="#b2b5be" stroke-width="0.2" textLength="31.0" lengthAdjust="spacingAndGlyphs" >150.000</text>
<rect x="934" y="116.6" width="41" height="11.6" fill="#ffeb3b"/>
<text x="970.5" y="125.6" font-size="8.8" fill="#131722" text-anchor="end" font-weight="normal" stroke="#131722" stroke-width="0.35" textLength="31.0" lengthAdjust="spacingAndGlyphs" >240.440</text>
<rect x="934" y="127.7" width="41" height="11.6" fill="#ffeb3b"/>
<text x="970.5" y="136.7" font-size="8.8" fill="#131722" text-anchor="end" font-weight="normal" stroke="#131722" stroke-width="0.35" textLength="31.0" lengthAdjust="spacingAndGlyphs" >229.209</text>
<rect x="934" y="138.9" width="41" height="11.6" fill="#ffeb3b"/>
<text x="970.5" y="147.9" font-size="8.8" fill="#131722" text-anchor="end" font-weight="normal" stroke="#131722" stroke-width="0.35" textLength="31.0" lengthAdjust="spacingAndGlyphs" >222.261</text>
<rect x="934" y="150.0" width="41" height="11.6" fill="#f23645"/>
<text x="970.5" y="159.0" font-size="8.8" fill="#ffffff" text-anchor="end" font-weight="normal" stroke="#ffffff" stroke-width="0.35" textLength="31.0" lengthAdjust="spacingAndGlyphs" >217.758</text>
<rect x="934" y="161.1" width="41" height="11.6" fill="#2962ff"/>
<text x="970.5" y="170.1" font-size="8.8" fill="#ffffff" text-anchor="end" font-weight="normal" stroke="#ffffff" stroke-width="0.35" textLength="31.0" lengthAdjust="spacingAndGlyphs" >217.588</text>
<rect x="934" y="172.1" width="41" height="11.6" fill="#ffeb3b"/>
<text x="970.5" y="181.1" font-size="8.8" fill="#131722" text-anchor="end" font-weight="normal" stroke="#131722" stroke-width="0.35" textLength="31.0" lengthAdjust="spacingAndGlyphs" >216.645</text>
<rect x="934" y="183.2" width="41" height="11.6" fill="#9c27b0"/>
<text x="970.5" y="192.2" font-size="8.8" fill="#ffffff" text-anchor="end" font-weight="normal" stroke="#ffffff" stroke-width="0.35" textLength="31.0" lengthAdjust="spacingAndGlyphs" >213.314</text>
<rect x="934" y="194.3" width="41" height="11.6" fill="#ffeb3b"/>
<text x="970.5" y="203.3" font-size="8.8" fill="#131722" text-anchor="end" font-weight="normal" stroke="#131722" stroke-width="0.35" textLength="31.0" lengthAdjust="spacingAndGlyphs" >211.029</text>
<rect x="934" y="205.3" width="41" height="11.6" fill="#ffeb3b"/>
<text x="970.5" y="214.3" font-size="8.8" fill="#131722" text-anchor="end" font-weight="normal" stroke="#131722" stroke-width="0.35" textLength="31.0" lengthAdjust="spacingAndGlyphs" >204.081</text>
<rect x="934" y="216.2" width="41" height="11.6" fill="#089981"/>
<text x="970.5" y="225.2" font-size="8.8" fill="#ffffff" text-anchor="end" font-weight="normal" stroke="#ffffff" stroke-width="0.35" textLength="31.0" lengthAdjust="spacingAndGlyphs" >201.140</text>
<rect x="934" y="233.8" width="41" height="11.6" fill="#ffeb3b"/>
<text x="970.5" y="242.8" font-size="8.8" fill="#131722" text-anchor="end" font-weight="normal" stroke="#131722" stroke-width="0.35" textLength="31.0" lengthAdjust="spacingAndGlyphs" >192.850</text>
<rect x="934" y="257.5" width="41" height="11.6" fill="#ffeb3b"/>
<text x="970.5" y="266.5" font-size="8.8" fill="#131722" text-anchor="end" font-weight="normal" stroke="#131722" stroke-width="0.35" textLength="31.0" lengthAdjust="spacingAndGlyphs" >181.619</text>
<rect x="934" y="272.0" width="41" height="11.6" fill="#ffeb3b"/>
<text x="970.5" y="281.0" font-size="8.8" fill="#131722" text-anchor="end" font-weight="normal" stroke="#131722" stroke-width="0.35" textLength="31.0" lengthAdjust="spacingAndGlyphs" >174.671</text>
<rect x="934" y="294.9" width="41" height="11.6" fill="#ffeb3b"/>
<text x="970.5" y="303.9" font-size="8.8" fill="#131722" text-anchor="end" font-weight="normal" stroke="#131722" stroke-width="0.35" textLength="31.0" lengthAdjust="spacingAndGlyphs" >163.439</text>
<text x="961.0" y="350.5" font-size="8.4" fill="#b2b5be" text-anchor="end" font-weight="normal" stroke="#b2b5be" stroke-width="0.2" textLength="21.8" lengthAdjust="spacingAndGlyphs" >70.00</text>
<text x="961.0" y="371.7" font-size="8.4" fill="#b2b5be" text-anchor="end" font-weight="normal" stroke="#b2b5be" stroke-width="0.2" textLength="21.8" lengthAdjust="spacingAndGlyphs" >60.00</text>
<text x="961.0" y="392.9" font-size="8.4" fill="#b2b5be" text-anchor="end" font-weight="normal" stroke="#b2b5be" stroke-width="0.2" textLength="21.8" lengthAdjust="spacingAndGlyphs" >50.00</text>
<text x="961.0" y="414.1" font-size="8.4" fill="#b2b5be" text-anchor="end" font-weight="normal" stroke="#b2b5be" stroke-width="0.2" textLength="21.8" lengthAdjust="spacingAndGlyphs" >40.00</text>
<text x="961.0" y="435.3" font-size="8.4" fill="#b2b5be" text-anchor="end" font-weight="normal" stroke="#b2b5be" stroke-width="0.2" textLength="21.8" lengthAdjust="spacingAndGlyphs" >30.00</text>
<rect x="934.4" y="398.7" width="30.6" height="10.5" rx="1" fill="#ffeb3b"/>
<text x="962.3" y="407.0" font-size="8.6" fill="#131722" text-anchor="end" font-weight="normal" stroke="#131722" stroke-width="0.2" textLength="21.8" lengthAdjust="spacingAndGlyphs" >43.52</text>
<text x="150.0" y="453.8" font-size="8.6" fill="#b2b5be" text-anchor="middle" font-weight="normal" stroke="#b2b5be" stroke-width="0.2" textLength="14.5" lengthAdjust="spacingAndGlyphs" >May</text>
<text x="238.0" y="453.8" font-size="8.6" fill="#b2b5be" text-anchor="middle" font-weight="normal" stroke="#b2b5be" stroke-width="0.2" textLength="12.0" lengthAdjust="spacingAndGlyphs" >Jul</text>
<text x="331.6" y="453.8" font-size="8.6" fill="#b2b5be" text-anchor="middle" font-weight="normal" stroke="#b2b5be" stroke-width="0.2" textLength="14.5" lengthAdjust="spacingAndGlyphs" >Sep</text>
<text x="424.0" y="453.8" font-size="8.6" fill="#b2b5be" text-anchor="middle" font-weight="normal" stroke="#b2b5be" stroke-width="0.2" textLength="14.5" lengthAdjust="spacingAndGlyphs" >Nov</text>
<text x="511.6" y="453.8" font-size="8.8" fill="#b2b5be" text-anchor="middle" font-weight="bold" stroke="#b2b5be" stroke-width="0.2" textLength="21.0" lengthAdjust="spacingAndGlyphs" >2025</text>
<text x="595.2" y="453.8" font-size="8.6" fill="#b2b5be" text-anchor="middle" font-weight="normal" stroke="#b2b5be" stroke-width="0.2" textLength="14.5" lengthAdjust="spacingAndGlyphs" >Mar</text>
<text x="689.5" y="453.8" font-size="8.6" fill="#b2b5be" text-anchor="middle" font-weight="normal" stroke="#b2b5be" stroke-width="0.2" textLength="14.5" lengthAdjust="spacingAndGlyphs" >May</text>
<text x="781.2" y="453.8" font-size="8.6" fill="#b2b5be" text-anchor="middle" font-weight="normal" stroke="#b2b5be" stroke-width="0.2" textLength="12.0" lengthAdjust="spacingAndGlyphs" >Jul</text>
<text x="875.8" y="453.8" font-size="8.6" fill="#b2b5be" text-anchor="middle" font-weight="normal" stroke="#b2b5be" stroke-width="0.2" textLength="14.5" lengthAdjust="spacingAndGlyphs" >Sep</text>
<path d="M953.2 446.3H958.6L961.2 451L958.6 455.7H953.2L950.6 451Z" fill="none" stroke="#b2b5be" stroke-width="1.35" stroke-linejoin="round"/><circle cx="955.9" cy="451" r="1.7" fill="#8a8d96" stroke="#b2b5be" stroke-width="0.9"/>
<rect x="0" y="0" width="52.5" height="487" fill="#131722"/>
<path d="M52.5 0V487" stroke="#262a35" stroke-width="1"/>
<path d="M16 16.5L21.5 15.8L23 21L32 7.4L33.4 8.2L23.5 24.8L21 24.8Z" fill="#d8dae0"/>
<path d="M25 42.3L16.8 50H19.2V56.8H23.2V52.6H26.8V56.8H30.8V50H33.2Z" fill="#2f8cff"/>
<text x="25.0" y="68.0" font-size="8.6" fill="#2f8cff" text-anchor="middle" font-weight="normal" stroke="#2f8cff" stroke-width="0.4" textLength="24.5" lengthAdjust="spacingAndGlyphs" >Märkte</text>
<rect x="19" y="92" width="12.5" height="12.5" rx="1.8" fill="none" stroke="#a3a6af" stroke-width="1.3"/><path d="M19 95.5H31.5M22 90.5V93M28.5 90.5V93M21.8 98.5H27.5M21.8 101H25" stroke="#a3a6af" stroke-width="1.2" fill="none"/>
<text x="25.0" y="116.8" font-size="8.6" fill="#c3c6ce" text-anchor="middle" font-weight="normal" stroke="#c3c6ce" stroke-width="0.4" textLength="30.0" lengthAdjust="spacingAndGlyphs" >Kalender</text>
<rect x="18" y="140.5" width="14.5" height="10.5" rx="1.5" fill="none" stroke="#a3a6af" stroke-width="1.3"/><path d="M18.5 141.5L25.25 146.5L32 141.5" stroke="#a3a6af" stroke-width="1.2" fill="none"/>
<text x="25.0" y="165.0" font-size="8.6" fill="#c3c6ce" text-anchor="middle" font-weight="normal" stroke="#c3c6ce" stroke-width="0.4" textLength="42.3" lengthAdjust="spacingAndGlyphs" >Nachrichten</text>
<path d="M21 188H32.5V199.5H19.5A1.5 1.5 0 0 1 18 198V191.5H21Z" fill="none" stroke="#a3a6af" stroke-width="1.2"/><path d="M21 191.5V198.5M23 190.5H30.5V194.5H23Z M23 196.5H30.5" stroke="#a3a6af" stroke-width="1.1" fill="none"/>
<text x="25.0" y="212.3" font-size="8.6" fill="#c3c6ce" text-anchor="middle" font-weight="normal" stroke="#c3c6ce" stroke-width="0.4" textLength="42.3" lengthAdjust="spacingAndGlyphs" >Nachrichten</text>
<circle cx="25.3" cy="433" r="7.3" fill="none" stroke="#a3a6af" stroke-width="1.3"/><path d="M25.3 425.7A7.3 7.3 0 0 0 25.3 440.3Z" fill="#a3a6af"/>
<circle cx="25.3" cy="468.3" r="7.3" fill="none" stroke="#a3a6af" stroke-width="1.3"/><path d="M23 466.3A2.3 2.3 0 1 1 25.3 468.6V470" stroke="#a3a6af" stroke-width="1.2" fill="none"/><circle cx="25.3" cy="472" r="0.7" fill="#a3a6af"/>
<path d="M52.5 35.5H975" stroke="#262a35" stroke-width="1"/>
<text x="62.8" y="23.9" font-size="13.5" fill="#d1d4dc" text-anchor="start" font-weight="normal" stroke="#d1d4dc" stroke-width="0.2" textLength="40.0" lengthAdjust="spacingAndGlyphs" >Märkte</text>
<rect x="437" y="5.2" width="115.6" height="22.5" rx="3.5" fill="#1c76d4"/>
<text x="445.7" y="19.9" font-size="9.8" fill="#ffffff" text-anchor="start" font-weight="bold" stroke="#ffffff" stroke-width="0.2" textLength="97.3" lengthAdjust="spacingAndGlyphs" >Zu Live-Konto wechseln</text>
<text x="610.7" y="14.8" font-size="9.8" fill="#d1d4dc" text-anchor="end" font-weight="normal" stroke="#d1d4dc" stroke-width="0.2" textLength="46.5" lengthAdjust="spacingAndGlyphs" >€ 10000.00</text>
<text x="610.7" y="25.8" font-size="7.2" fill="#b2b5be" text-anchor="end" font-weight="normal" stroke="#b2b5be" stroke-width="0.2" textLength="36.3" lengthAdjust="spacingAndGlyphs" >Kontostand</text>
<text x="685.7" y="14.8" font-size="9.8" fill="#d1d4dc" text-anchor="end" font-weight="normal" stroke="#d1d4dc" stroke-width="0.2" textLength="46.7" lengthAdjust="spacingAndGlyphs" >€ 10000.00</text>
<text x="685.7" y="25.8" font-size="7.2" fill="#b2b5be" text-anchor="end" font-weight="normal" stroke="#b2b5be" stroke-width="0.2" textLength="61.8" lengthAdjust="spacingAndGlyphs" >Verfügbares Kapital</text>
<text x="723.9" y="14.8" font-size="9.8" fill="#d1d4dc" text-anchor="end" font-weight="normal" stroke="#d1d4dc" stroke-width="0.2" textLength="24.9" lengthAdjust="spacingAndGlyphs" >€ 0.00</text>
<text x="723.9" y="25.8" font-size="7.2" fill="#b2b5be" text-anchor="end" font-weight="normal" stroke="#b2b5be" stroke-width="0.2" textLength="21.8" lengthAdjust="spacingAndGlyphs" >Margin</text>
<text x="787.0" y="14.8" font-size="9.8" fill="#d1d4dc" text-anchor="end" font-weight="normal" stroke="#d1d4dc" stroke-width="0.2" textLength="25.2" lengthAdjust="spacingAndGlyphs" >€ 0.00</text>
<text x="787.0" y="25.8" font-size="7.2" fill="#b2b5be" text-anchor="end" font-weight="normal" stroke="#b2b5be" stroke-width="0.2" textLength="49.8" lengthAdjust="spacingAndGlyphs" >Gewinn/Verlust</text>
<rect x="802.3" y="5.5" width="27" height="11.3" rx="2" fill="none" stroke="#d4a72c" stroke-width="1.1"/>
<text x="815.5" y="14.2" font-size="6.8" fill="#d4a72c" text-anchor="middle" font-weight="bold" stroke="#d4a72c" stroke-width="0.2" textLength="21.8" lengthAdjust="spacingAndGlyphs" >DEMO</text>
<text x="816.0" y="26.2" font-size="7.2" fill="#b2b5be" text-anchor="middle" font-weight="normal" stroke="#b2b5be" stroke-width="0.2" textLength="26.4" lengthAdjust="spacingAndGlyphs" >Account</text>
<text x="942.1" y="15.7" font-size="10.2" fill="#d1d4dc" text-anchor="end" font-weight="normal" stroke="#d1d4dc" stroke-width="0.2" textLength="63.1" lengthAdjust="spacingAndGlyphs" >Dirk Friczewsky</text>
<text x="942.1" y="25.3" font-size="8.6" fill="#9598a1" text-anchor="end" font-weight="normal" stroke="#9598a1" stroke-width="0.2" textLength="92.3" lengthAdjust="spacingAndGlyphs" >dirk.friczewsky@gmail.com</text>
<circle cx="957.6" cy="17" r="9.3" fill="#b2b5be"/><circle cx="957.6" cy="14" r="3" fill="#131722"/><path d="M952 22.3A5.6 4.5 0 0 1 963.2 22.3Z" fill="#131722"/>
<path d="M58.5 36V487" stroke="#262a35" stroke-width="1"/>
<path d="M59 60.5H975" stroke="#262a35" stroke-width="1"/>
<path d="M95.5 62V461" stroke="#262a35" stroke-width="1"/>
<path d="M95.5 460.5H975" stroke="#262a35" stroke-width="1.5"/>
<circle cx="70" cy="47.7" r="3.9" fill="none" stroke="#b2b5be" stroke-width="1.3"/><path d="M72.8 50.5L75.5 53.2" stroke="#b2b5be" stroke-width="1.4"/>
<text x="78.0" y="51.6" font-size="9.9" fill="#d1d4dc" text-anchor="start" font-weight="normal" stroke="#d1d4dc" stroke-width="0.5" textLength="39.8" lengthAdjust="spacingAndGlyphs" >SOXX.US</text>
<circle cx="136.3" cy="48" r="5.6" fill="none" stroke="#b2b5be" stroke-width="1.1"/><path d="M133 48H139.6M136.3 44.7V51.3" stroke="#b2b5be" stroke-width="1.1"/>
<path d="M151.5 42V54" stroke="#262a35" stroke-width="1"/>
<path d="M181.5 42V54" stroke="#262a35" stroke-width="1"/>
<path d="M212.5 42V54" stroke="#262a35" stroke-width="1"/>
<path d="M289.5 42V54" stroke="#262a35" stroke-width="1"/>
<text x="166.6" y="51.8" font-size="9.4" fill="#d1d4dc" text-anchor="middle" font-weight="normal" stroke="#d1d4dc" stroke-width="0.2" >D</text>
<path d="M194.6 41.8V43.8M194.6 52.9V55.2M200.1 44V46M200.1 51.6V53.5" stroke="#b2b5be" stroke-width="1.1"/><rect x="193" y="43.8" width="3.3" height="9.1" rx="0.6" fill="none" stroke="#b2b5be" stroke-width="1.1"/><rect x="198.4" y="46" width="3.5" height="5.6" rx="0.6" fill="none" stroke="#b2b5be" stroke-width="1.1"/>
<path d="M229.8 44.6C229.2 43.3 226 42.9 225.9 45.8V51.6C225.9 54.6 223.3 54.9 222.6 53.4M223.7 47.6H228.2M228.4 50.4L231.8 53.8M231.8 50.4L228.4 53.8" stroke="#b2b5be" stroke-width="1.1" fill="none"/>
<text x="237.5" y="51.6" font-size="9.4" fill="#d1d4dc" text-anchor="start" font-weight="normal" stroke="#d1d4dc" stroke-width="0.2" textLength="41.5" lengthAdjust="spacingAndGlyphs" >Indicators</text>
<path d="M299.5 48H304A3.5 3.5 0 0 1 307.5 51.5V52M302 45.5L299.5 48L302 50.5" stroke="#b2b5be" stroke-width="1.1" fill="none"/>
<path d="M332.5 48H328A3.5 3.5 0 0 0 324.5 51.5V52M330 45.5L332.5 48L330 50.5" stroke="#4a4e59" stroke-width="1.1" fill="none"/>
<rect x="824.5" y="43.3" width="12" height="11" rx="1.5" fill="none" stroke="#b2b5be" stroke-width="1.1"/>
<text x="852.6" y="51.8" font-size="9.6" fill="#d1d4dc" text-anchor="start" font-weight="normal" stroke="#d1d4dc" stroke-width="0.2" textLength="20.2" lengthAdjust="spacingAndGlyphs" >Save</text>
<path d="M888.5 47L890.6 49L892.7 47" stroke="#b2b5be" stroke-width="1" fill="none"/>
<path d="M900.5 42V55" stroke="#262a35" stroke-width="1"/>
<path d="M916 43.4A4.9 4.9 0 1 0 918.9 49.7M917.9 51.6L920.8 54.6" stroke="#b2b5be" stroke-width="1.1" fill="none" stroke-linecap="round"/><path d="M917.3 41.2L914.5 45.7H917.3L914.9 49.5" stroke="#b2b5be" stroke-width="1.05" fill="none" stroke-linejoin="round"/>
<path d="M944.76 46.85 L946.60 47.24 L946.60 49.56 L944.76 49.95 L944.46 50.67 L945.49 52.24 L943.84 53.89 L942.27 52.86 L941.55 53.16 L941.16 55.00 L938.84 55.00 L938.45 53.16 L937.73 52.86 L936.16 53.89 L934.51 52.24 L935.54 50.67 L935.24 49.95 L933.40 49.56 L933.40 47.24 L935.24 46.85 L935.54 46.13 L934.51 44.56 L936.16 42.91 L937.73 43.94 L938.45 43.64 L938.84 41.80 L941.16 41.80 L941.55 43.64 L942.27 43.94 L943.84 42.91 L945.49 44.56 L944.46 46.13Z" fill="none" stroke="#b2b5be" stroke-width="1.05" stroke-linejoin="round"/><circle cx="940" cy="48.4" r="2.1" fill="none" stroke="#b2b5be" stroke-width="1.05"/>
<path d="M957.5 46.2Q957.5 44.6 959 44.6H961L962.2 43H966.2L967.4 44.6H969.5Q971 44.6 971 46.2V52.3Q971 53.8 969.5 53.8H959Q957.5 53.8 957.5 52.3Z" fill="none" stroke="#b2b5be" stroke-width="1.1" stroke-linejoin="round"/><circle cx="964.2" cy="49" r="3" fill="none" stroke="#b2b5be" stroke-width="1.1"/>
<path d="M69.3 77.5H74.5M79 77.5H84.3M76.7 70V75.2M76.7 79.8V85.2" stroke="#2962ff" stroke-width="1.2"/>
<path d="M72 104.5L80.8 96.3" stroke="#b2b5be" stroke-width="1.1"/><circle cx="71" cy="105.6" r="1.9" fill="#5d606b" stroke="#b2b5be" stroke-width="1"/><circle cx="81.8" cy="95.2" r="1.9" fill="#5d606b" stroke="#b2b5be" stroke-width="1"/>
<path d="M69.3 117.6H83.7M69.3 121.7H81.5M69.3 125.4H83.7M71.5 129.3H83.7" stroke="#b2b5be" stroke-width="1.1"/><circle cx="83.3" cy="121.7" r="1.6" fill="#131722" stroke="#b2b5be" stroke-width="1.1"/><circle cx="69.8" cy="129.3" r="1.6" fill="#131722" stroke="#b2b5be" stroke-width="1.1"/>
<path d="M72.6 141.4L70.8 152.5L75.7 146.3L80.6 142L82.5 150.6L75.7 146.3L72.6 141.4M70.8 152.5L82.5 150.6" stroke="#b2b5be" stroke-width="1" fill="none"/><circle cx="72.6" cy="141.4" r="1.5" fill="#131722" stroke="#b2b5be" stroke-width="1"/><circle cx="80.6" cy="142" r="1.5" fill="#131722" stroke="#b2b5be" stroke-width="1"/><circle cx="75.7" cy="146.3" r="1.5" fill="#131722" stroke="#b2b5be" stroke-width="1"/><circle cx="70.8" cy="152.5" r="1.5" fill="#131722" stroke="#b2b5be" stroke-width="1"/><circle cx="82.5" cy="150.6" r="1.5" fill="#131722" stroke="#b2b5be" stroke-width="1"/>
<path d="M70.5 165.5H83.5M70.5 172H83.5M70.5 176.3H83.5" stroke="#b2b5be" stroke-width="1"/><circle cx="70" cy="165.5" r="1.5" fill="#131722" stroke="#b2b5be" stroke-width="1"/><circle cx="83.5" cy="172" r="1.5" fill="#131722" stroke="#b2b5be" stroke-width="1"/><circle cx="70" cy="172" r="1.5" fill="#131722" stroke="#b2b5be" stroke-width="1"/><circle cx="70" cy="176.3" r="1.5" fill="#131722" stroke="#b2b5be" stroke-width="1"/>
<path d="M69 199.5C70 195.5 72.5 191.8 76 191.8L79.2 193.5C78.5 196.8 75 199.5 69 199.5Z" stroke="#b2b5be" stroke-width="1.1" fill="none" stroke-linejoin="round"/><path d="M78.6 190.6L80.7 192.7L85.2 188.7" stroke="#b2b5be" stroke-width="1.1" fill="none"/>
<path d="M71.3 214.2V212.4H82.1V214.2M76.7 212.4V223M74.3 223H79.1" stroke="#b2b5be" stroke-width="1.15" fill="none"/>
<circle cx="76.3" cy="240.3" r="7.2" fill="none" stroke="#b2b5be" stroke-width="1.1"/><circle cx="74" cy="239" r="0.8" fill="#b2b5be"/><circle cx="78.8" cy="239" r="0.8" fill="#b2b5be"/><path d="M73.3 242.3Q76.4 245 79.5 242.3" stroke="#b2b5be" stroke-width="1" fill="none"/>
<path d="M64.3 256.5H87.8M64.3 311H87.8M64.3 413.5H87.8" stroke="#262a35" stroke-width="1"/>
<path d="M69 275.5L81.5 266L84 269L71.5 278.5Z M72.5 274.5L71.5 273M75 272.5L74 271M77.5 270.5L76.5 269M80 268.5L79 267" stroke="#b2b5be" stroke-width="1" fill="none"/>
<circle cx="75" cy="294" r="5" fill="none" stroke="#b2b5be" stroke-width="1.1"/><path d="M78.6 297.6L81.5 300.5M72.5 294H77.5M75 291.5V296.5" stroke="#b2b5be" stroke-width="1.1"/>
<path d="M71 333V327A5.4 5.4 0 0 1 81.8 327V333M71 330.5H74M78.8 330.5H81.8M74 333V327A2.4 2.4 0 0 1 78.8 327V333" stroke="#b2b5be" stroke-width="1.1" fill="none"/>
<path d="M69.6 352.8L77.8 344.6L80.4 347.2L72.2 355.4L69.2 355.8Z M76.3 346.1L78.9 348.7" stroke="#b2b5be" stroke-width="1.05" fill="none" stroke-linejoin="round"/><rect x="77.3" y="353.2" width="6.4" height="5" rx="0.8" fill="#131722" stroke="#b2b5be" stroke-width="1.05"/><path d="M78.8 353.2V351.7A1.7 1.7 0 0 1 82.2 351.7V353.2" stroke="#b2b5be" stroke-width="1.05" fill="none"/>
<rect x="71" y="372.5" width="10.5" height="7.5" rx="1" fill="none" stroke="#b2b5be" stroke-width="1.1"/><path d="M73.5 372.5V370A2.8 2.8 0 0 1 79 369" stroke="#b2b5be" stroke-width="1.1" fill="none"/><path d="M76.2 375V377" stroke="#b2b5be" stroke-width="1.2"/>
<path d="M68.5 394Q76.3 386.5 84 394Q76.3 401.5 68.5 394Z" stroke="#b2b5be" stroke-width="1.1" fill="none"/><circle cx="76.3" cy="394" r="2" fill="none" stroke="#b2b5be" stroke-width="1.1"/><path d="M77.5 403L82 398.5" stroke="#b2b5be" stroke-width="1.1"/>
<path d="M70.3 424.2H82.9M73.8 424.2V421.8H79.4V424.2M71.6 424.2L72.3 434.3Q72.5 435.6 73.8 435.6H79.4Q80.7 435.6 80.9 434.3L81.6 424.2M74.9 427.2V432.6M78.3 427.2V432.6" stroke="#b2b5be" stroke-width="1.1" fill="none" stroke-linejoin="round"/>
<rect x="54.5" y="271" width="7" height="17.5" rx="3" fill="#131722" stroke="#262a35" stroke-width="1"/><path d="M56.9 279.8L59.2 282.2L56.9 284.6" stroke="#b2b5be" stroke-width="1.1" fill="none"/>
<rect x="91.2" y="432.5" width="6.5" height="17" rx="3" fill="#131722" stroke="#262a35" stroke-width="1"/><path d="M95.2 439L93.3 441.2L95.2 443.4" stroke="#b2b5be" stroke-width="0.9" fill="none"/>
<text x="105.9" y="477.3" font-size="8.6" fill="#0b0d12" text-anchor="start" font-weight="normal" stroke="#0b0d12" stroke-width="0.2" textLength="41.0" lengthAdjust="spacingAndGlyphs" >Powered by</text>
<text x="149.0" y="477.3" font-size="8.6" fill="#2f74d0" text-anchor="start" font-weight="normal" stroke="#2f74d0" stroke-width="0.2" textLength="43.4" lengthAdjust="spacingAndGlyphs" >TradingView</text>
<path d="M149 478.7H192.4" stroke="#2f74d0" stroke-width="0.7"/>
<path d="M198.5 461V487M367.5 467V483M907.5 467V483" stroke="#262a35" stroke-width="1"/>
<text x="214.0" y="478.0" font-size="9.4" fill="#d1d4dc" text-anchor="middle" font-weight="normal" stroke="#d1d4dc" stroke-width="0.2" >1D</text>
<text x="233.7" y="478.0" font-size="9.4" fill="#d1d4dc" text-anchor="middle" font-weight="normal" stroke="#d1d4dc" stroke-width="0.2" >5D</text>
<text x="254.7" y="478.0" font-size="9.4" fill="#d1d4dc" text-anchor="middle" font-weight="normal" stroke="#d1d4dc" stroke-width="0.2" >1M</text>
<text x="275.4" y="478.0" font-size="9.4" fill="#d1d4dc" text-anchor="middle" font-weight="normal" stroke="#d1d4dc" stroke-width="0.2" >3M</text>
<text x="296.7" y="478.0" font-size="9.4" fill="#d1d4dc" text-anchor="middle" font-weight="normal" stroke="#d1d4dc" stroke-width="0.2" >6M</text>
<text x="316.7" y="478.0" font-size="9.4" fill="#d1d4dc" text-anchor="middle" font-weight="normal" stroke="#d1d4dc" stroke-width="0.2" >1Y</text>
<text x="335.8" y="478.0" font-size="9.4" fill="#d1d4dc" text-anchor="middle" font-weight="normal" stroke="#d1d4dc" stroke-width="0.2" >5Y</text>
<text x="354.9" y="478.0" font-size="9.4" fill="#d1d4dc" text-anchor="middle" font-weight="normal" stroke="#d1d4dc" stroke-width="0.2" >All</text>
<path d="M376 469H388V481H382M376 481V469M376 472.5H388M379 467.5V470M385 467.5V470M376 478H381M379 476L381 478L379 480" stroke="#b2b5be" stroke-width="1" fill="none"/>
<text x="900.4" y="478.3" font-size="9.6" fill="#d1d4dc" text-anchor="end" font-weight="normal" stroke="#d1d4dc" stroke-width="0.2" textLength="77.4" lengthAdjust="spacingAndGlyphs" >07:16:35 (UTC+1)</text>
<text x="918.6" y="478.3" font-size="9.6" fill="#d1d4dc" text-anchor="middle" font-weight="normal" stroke="#d1d4dc" stroke-width="0.2" >%</text>
<text x="931.4" y="478.3" font-size="9.6" fill="#d1d4dc" text-anchor="start" font-weight="normal" stroke="#d1d4dc" stroke-width="0.2" textLength="12.6" lengthAdjust="spacingAndGlyphs" >log</text>
<text x="951.6" y="478.3" font-size="9.6" fill="#d1d4dc" text-anchor="start" font-weight="normal" stroke="#d1d4dc" stroke-width="0.2" textLength="18.4" lengthAdjust="spacingAndGlyphs" >auto</text>
<rect x="509.5" y="484" width="17.5" height="8" rx="3" fill="#131722" stroke="#262a35" stroke-width="0.9"/><path d="M516.5 487.5L518.4 485.6L520.3 487.5" stroke="#d1d4dc" stroke-width="1.2" fill="none"/>
</svg>
</body></html>
